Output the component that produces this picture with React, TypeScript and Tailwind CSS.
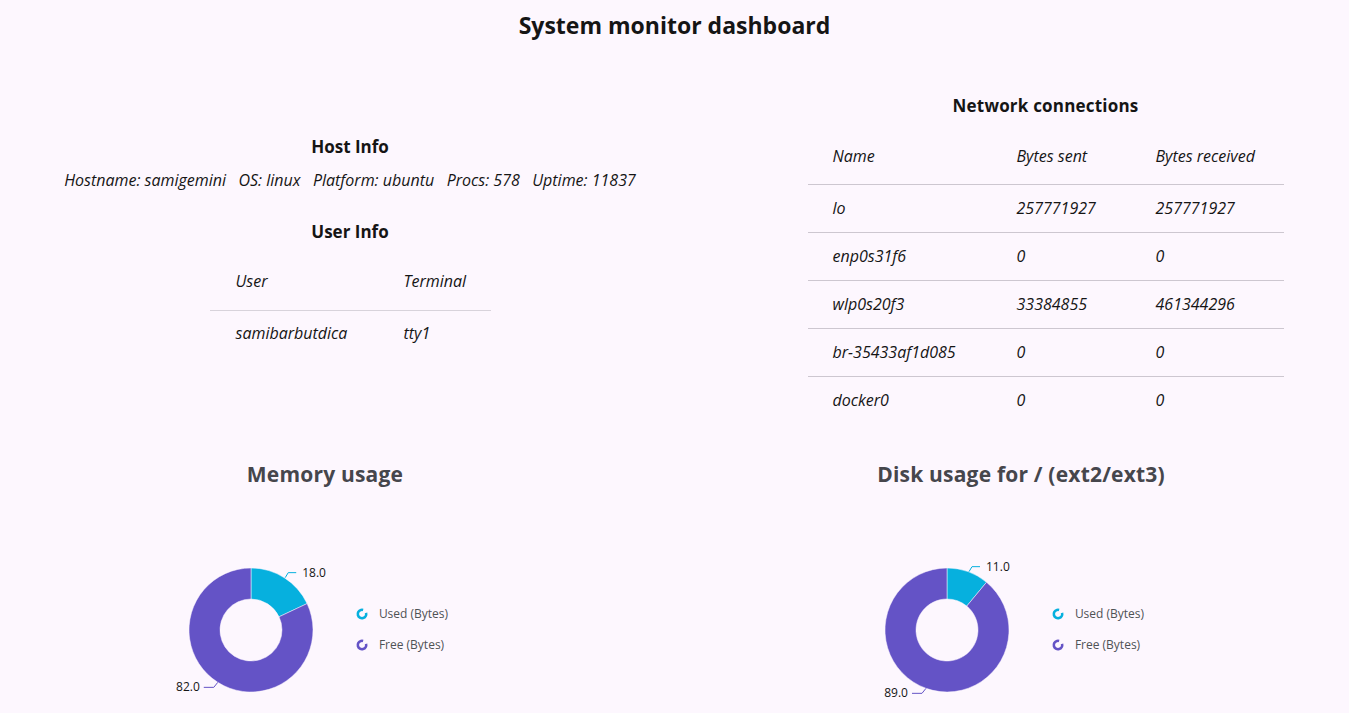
import React from "react";

const FONT = { fontFamily: '"Open Sans", "Noto Sans", sans-serif' };

const networkRows = [
  { name: "lo", sent: "257771927", received: "257771927" },
  { name: "enp0s31f6", sent: "0", received: "0" },
  { name: "wlp0s20f3", sent: "33384855", received: "461344296" },
  { name: "br-35433af1d085", sent: "0", received: "0" },
  { name: "docker0", sent: "0", received: "0" },
];

const CYAN = "#06b0de";
const PURPLE = "#6453c6";

function polar(cx: number, cy: number, r: number, deg: number) {
  const a = (deg * Math.PI) / 180;
  return [cx + r * Math.sin(a), cy - r * Math.cos(a)];
}

function slicePath(cx: number, cy: number, ro: number, ri: number, a0: number, a1: number) {
  const [x0, y0] = polar(cx, cy, ro, a0);
  const [x1, y1] = polar(cx, cy, ro, a1);
  const [x2, y2] = polar(cx, cy, ri, a1);
  const [x3, y3] = polar(cx, cy, ri, a0);
  const large = a1 - a0 > 180 ? 1 : 0;
  return `M${x0} ${y0} A${ro} ${ro} 0 ${large} 1 ${x1} ${y1} L${x2} ${y2} A${ri} ${ri} 0 ${large} 0 ${x3} ${y3} Z`;
}

function LegendIcon({ color }: { color: string }) {
  return (
    <svg width="12" height="12" viewBox="0 0 12 12">
      <circle cx="6" cy="6" r="4.2" fill="none" stroke={color} strokeWidth="2.6" strokeDasharray="21.5 4.9" transform="rotate(-15 6 6)" />
    </svg>
  );
}

function Donut({ used }: { used: number }) {
  const cx = 96;
  const cy = 79;
  const ro = 62;
  const ri = 31;
  const free = 100 - used;
  const usedEnd = used * 3.6;
  const mid1 = usedEnd / 2;
  const mid2 = usedEnd + (360 - usedEnd) / 2;
  const [p1x, p1y] = polar(cx, cy, ro, mid1);
  const [p2x, p2y] = polar(cx, cy, ro, mid2);
  const lab1y = p1y - 5;
  const lab2y = p2y + 5;
  return (
    <div className="flex items-center">
      <svg width="190" height="160" viewBox="0 0 190 160" className="shrink-0">
        <path d={slicePath(cx, cy, ro, ri, 0, usedEnd)} fill={CYAN} stroke="#fdf7fe" strokeWidth="0.5" />
        <path d={slicePath(cx, cy, ro, ri, usedEnd, 360)} fill={PURPLE} stroke="#fdf7fe" strokeWidth="0.5" />
        <polyline points={`${p1x + 1},${p1y} ${p1x + 4},${lab1y} ${p1x + 12},${lab1y}`} fill="none" stroke={CYAN} strokeWidth="1" />
        <text x={p1x + 18} y={lab1y + 4} fontSize="12" fill="#151515" style={FONT}>
          {used.toFixed(1)}
        </text>
        <polyline points={`${p2x},${p2y} ${p2x - 4},${lab2y} ${p2x - 14},${lab2y}`} fill="none" stroke={PURPLE} strokeWidth="1" />
        <text x={p2x - 18} y={lab2y + 4} fontSize="12" fill="#151515" textAnchor="end" style={FONT}>
          {free.toFixed(1)}
        </text>
      </svg>
      <div className="flex flex-col gap-[13px] ml-[11px] mb-[4px] text-[12px] text-[#4f5255]">
        <div className="flex items-center gap-[11px]">
          <LegendIcon color={CYAN} />
          <span>Used (Bytes)</span>
        </div>
        <div className="flex items-center gap-[11px]">
          <LegendIcon color={PURPLE} />
          <span>Free (Bytes)</span>
        </div>
      </div>
    </div>
  );
}

function ChartCard({ title, used }: { title: string; used: number }) {
  return (
    <div className="w-[650px] flex flex-col items-center">
      <h2 className="text-[21px] font-bold text-[#46464c] h-[30px] leading-[30px] tracking-[0.2px]">{title}</h2>
      <div className="mt-[62px] ml-[-47px]">
        <Donut used={used} />
      </div>
    </div>
  );
}

export default function App() {
  return (
    <div className="min-h-screen w-full bg-[#fdf7fe] text-[#151515] overflow-hidden" style={FONT}>
      <h1 className="text-center text-[23px] font-bold pt-[8px] h-[40px] leading-[34px]">System monitor dashboard</h1>

      <div className="flex mt-[52px]">
        {/* left column */}
        <div className="w-[700px] flex flex-col items-center pt-[41px]">
          <h3 className="text-[17px] font-bold leading-[28px]">Host Info</h3>
          <p className="italic text-[16px] leading-[22px] mt-[8px] whitespace-pre">
            {"Hostname: samigemini   OS: linux   Platform: ubuntu   Procs: 578   Uptime: 11837"}
          </p>
          <h3 className="text-[17px] font-bold leading-[28px] mt-[27px]">User Info</h3>
          <table className="w-[281px] table-fixed italic text-[16px] mt-[7px] border-collapse">
            <colgroup>
              <col className="w-[194px]" />
              <col />
            </colgroup>
            <thead>
              <tr className="border-b border-[#d8d3db] h-[57px]">
                <th className="text-left font-normal pl-[26px] align-middle">User</th>
                <th className="text-left font-normal align-middle">Terminal</th>
              </tr>
            </thead>
            <tbody>
              <tr className="h-[46px]">
                <td className="pl-[26px]">samibarbutdica</td>
                <td>tty1</td>
              </tr>
            </tbody>
          </table>
        </div>

        {/* right column */}
        <div className="flex-1 flex flex-col items-center pl-[42px]">
          <h3 className="text-[17px] font-bold leading-[28px] tracking-[0.2px]">Network connections</h3>
          <table className="w-[476px] table-fixed italic text-[16px] mt-[8px] border-collapse">
            <colgroup>
              <col className="w-[185px]" />
              <col className="w-[139px]" />
              <col />
            </colgroup>
            <thead>
              <tr className="border-b border-[#cdc7d0] h-[56px]">
                <th className="text-left font-normal pl-[25px]">Name</th>
                <th className="text-left font-normal pl-[24px]">Bytes sent</th>
                <th className="text-left font-normal pl-[24px]">Bytes received</th>
              </tr>
            </thead>
            <tbody>
              {networkRows.map((r, i) => (
                <tr key={r.name} className={`h-[48px] ${i < networkRows.length - 1 ? "border-b border-[#cdc7d0]" : ""}`}>
                  <td className="pl-[25px]">{r.name}</td>
                  <td className="pl-[24px]">{r.sent}</td>
                  <td className="pl-[24px]">{r.received}</td>
                </tr>
              ))}
            </tbody>
          </table>
        </div>
      </div>

      <div className="grid grid-cols-[650px_650px] gap-x-[46px] mt-[35px]">
        <ChartCard title="Memory usage" used={18} />
        <ChartCard title="Disk usage for / (ext2/ext3)" used={11} />
      </div>
    </div>
  );
}
